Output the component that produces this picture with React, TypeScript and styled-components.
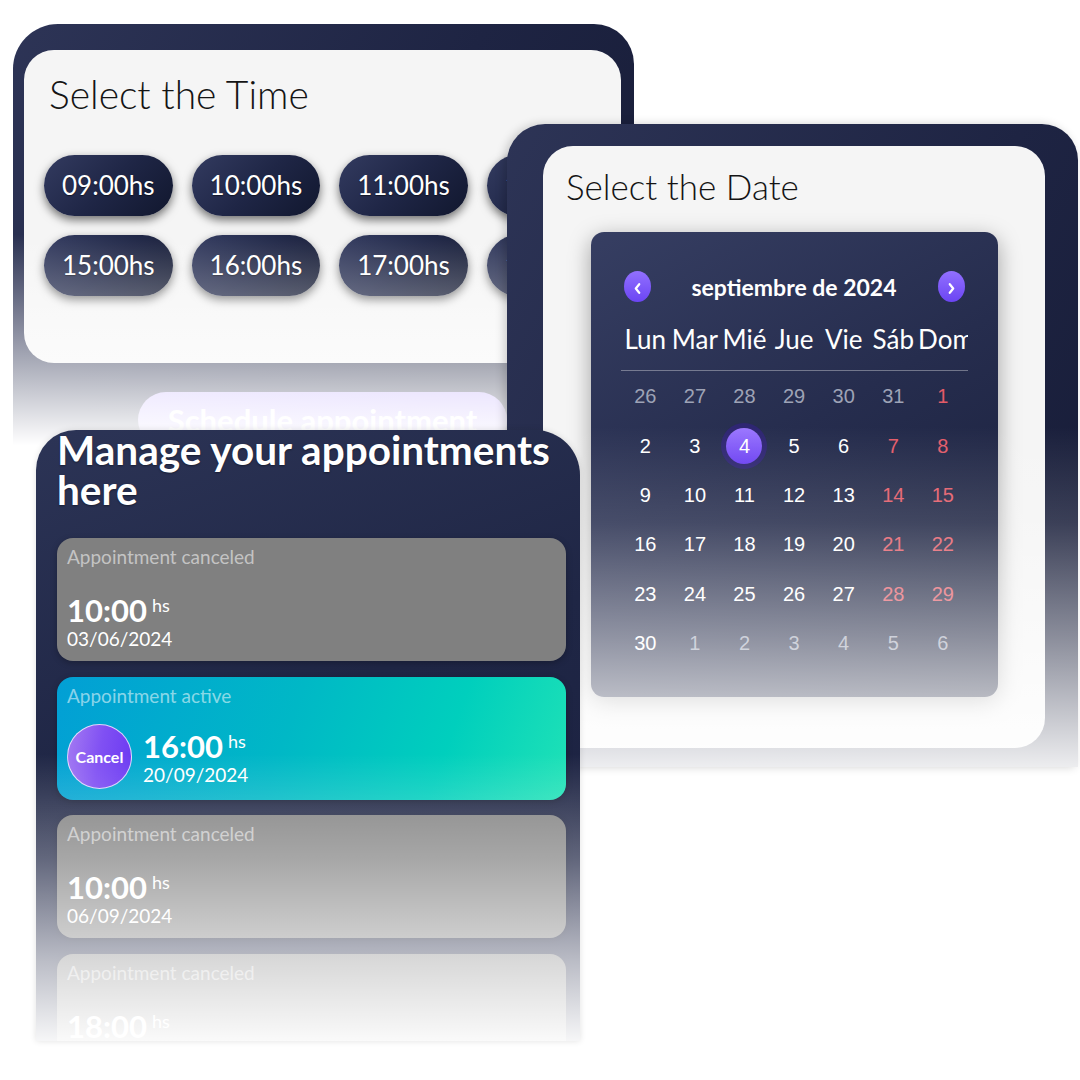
import React from 'react';
import styled, { createGlobalStyle, css } from 'styled-components';

const GlobalStyle = createGlobalStyle`
  html, body {
    margin: 0;
    padding: 0;
    background: #ffffff;
  }
  body {
    font-family: Lato, "Open Sans", sans-serif;
  }
  * {
    box-sizing: border-box;
  }
`;

const Canvas = styled.div`
  position: relative;
  width: 1080px;
  height: 1080px;
  overflow: hidden;
  background: #ffffff;
`;

// each screenshot is a "window" on a free canvas, fading out to white at the bottom
const Window = styled.section<{ $fade: string }>`
  position: absolute;
  overflow: hidden;
  background: linear-gradient(120deg, #2d3456 0%, #1e2443 55%, #161b35 100%);

  &::after {
    content: '';
    position: absolute;
    inset: 0;
    pointer-events: none;
    background: linear-gradient(to bottom, ${p => p.$fade});
  }
`;

const TimeWindow = styled(Window)`
  left: 13px;
  top: 24px;
  width: 621px;
  height: 421px;
  z-index: 1;
  border-radius: 45px 40px 0 0;
  padding: 26px 13px 0 11px;
  display: flex;
  flex-direction: column;
  align-items: center;
`;

const DateWindow = styled(Window)`
  left: 507px;
  top: 124px;
  width: 571px;
  height: 643px;
  z-index: 2;
  border-radius: 38px 36px 0 0;
  padding: 22px 33px 19px 36px;
  box-shadow: -3px 0 10px rgba(0, 0, 0, 0.18);
`;

const ManageWindow = styled(Window)`
  left: 36px;
  top: 430px;
  width: 544px;
  height: 611px;
  z-index: 3;
  border-radius: 40px 45px 0 0;
  padding: 0 14px 0 21px;
  background: linear-gradient(160deg, #2c3456 0%, #1f2645 45%, #1a2040 100%);
  box-shadow: 0 0 6px rgba(0, 0, 0, 0.12);
`;

const WhiteCard = styled.div`
  background: #f5f5f5;
  border-radius: 30px;
`;

const TimeCard = styled(WhiteCard)`
  width: 100%;
  height: 313px;
  padding: 21px 20px 0 20px;
  flex-shrink: 0;
`;

const DateCard = styled(WhiteCard)`
  height: 100%;
  padding: 19px 0 0 0;
  display: flex;
  flex-direction: column;
  align-items: center;
`;

const PanelTitle = styled.h2<{ $size: number }>`
  margin: 0;
  font-family: Lato, "Open Sans", sans-serif;
  font-weight: 300;
  font-size: ${p => p.$size}px;
  line-height: 1.2;
  color: #141414;
  white-space: nowrap;
`;

const TimeTitle = styled(PanelTitle)`
  margin: 0 0 37px 5px;
`;

const DateTitle = styled(PanelTitle)`
  align-self: flex-start;
  margin: 0 0 25px 23px;
`;

const PillRow = styled.div`
  display: flex;
  flex-wrap: nowrap;
  gap: 19px;
  margin-bottom: 19px;
`;

const TimePill = styled.button`
  flex-shrink: 0;
  height: 61px;
  padding: 0 18px;
  border: none;
  border-radius: 31px;
  background: linear-gradient(135deg, #333b60 0%, #1f2646 50%, #11172e 100%);
  box-shadow: 0 4px 10px rgba(0, 0, 0, 0.55);
  color: #ffffff;
  font-family: Lato, "Open Sans", sans-serif;
  font-size: 26px;
  font-weight: 400;
  text-shadow: 0 1px 1px rgba(0, 0, 0, 0.5);
`;

const ScheduleButton = styled.button`
  flex-shrink: 0;
  margin-top: 29px;
  width: 369px;
  height: 56px;
  padding: 0;
  border: none;
  border-radius: 28px;
  background: linear-gradient(90deg, #c3b0ff 0%, #b49cfb 100%);
  color: #ffffff;
  font-family: Lato, "Open Sans", sans-serif;
  font-size: 31px;
  font-weight: 700;
  white-space: nowrap;
`;

const Calendar = styled.div`
  width: 407px;
  height: 465px;
  flex-shrink: 0;
  border-radius: 13px;
  padding: 39px 30px 0 30px;
  background: linear-gradient(150deg, #363e62 0%, #262d4e 45%, #171d38 100%);
  box-shadow: 0 6px 22px rgba(0, 0, 0, 0.35);
`;

const NavRow = styled.div`
  display: flex;
  align-items: center;
  justify-content: space-between;
  padding: 0 3px;
  height: 31px;
`;

const NavButton = styled.button`
  width: 27px;
  height: 31px;
  padding: 3px 0 0 0;
  border: none;
  border-radius: 50%;
  display: flex;
  align-items: center;
  justify-content: center;
  background: linear-gradient(180deg, #9270ff 0%, #6b45f3 100%);
`;

const Chevron: React.FC<{ dir: 'left' | 'right' }> = ({ dir }) => (
  <svg width="7" height="11" viewBox="0 0 7 11" fill="none">
    <path
      d={dir === 'left' ? 'M5.2 1.2 L1.8 5.5 L5.2 9.8' : 'M1.8 1.2 L5.2 5.5 L1.8 9.8'}
      stroke="#ffffff"
      strokeWidth="2.2"
      strokeLinecap="round"
      strokeLinejoin="round"
    />
  </svg>
);

const MonthLabel = styled.span`
  font-family: Lato, "Open Sans", sans-serif;
  font-size: 23px;
  font-weight: 700;
  color: #ffffff;
`;

const WeekHeader = styled.div`
  display: grid;
  grid-template-columns: repeat(7, 49.6px);
  margin-top: 15px;
  padding-bottom: 9px;
  border-bottom: 1px solid rgba(255, 255, 255, 0.35);
  overflow: hidden;
`;

const WeekDay = styled.span`
  height: 44px;
  line-height: 44px;
  text-align: center;
  white-space: nowrap;
  font-family: Lato, "Open Sans", sans-serif;
  font-size: 26px;
  font-weight: 400;
  color: #ffffff;
`;

const DayGrid = styled.div`
  display: grid;
  grid-template-columns: repeat(7, 49.6px);
  grid-auto-rows: 49.4px;
  padding-top: 1px;
`;

type DayKind = 'other' | 'normal' | 'weekend' | 'selected';

const Day = styled.span<{ $kind: DayKind }>`
  display: flex;
  align-items: center;
  justify-content: center;
  font-family: "Liberation Sans", Arial, sans-serif;
  font-size: 20px;
  color: ${p =>
    p.$kind === 'other' ? '#9ea3b6' : p.$kind === 'weekend' ? '#e35b68' : '#ffffff'};

  ${p =>
    p.$kind === 'selected' &&
    css`
      & > b {
        width: 36px;
        height: 36px;
        border-radius: 50%;
        display: flex;
        align-items: center;
        justify-content: center;
        font-weight: 400;
        background: linear-gradient(180deg, #9c78ff 0%, #6a3ff2 100%);
        box-shadow: 0 0 0 5px rgba(48, 36, 120, 0.85);
      }
    `}
`;

const ManageTitle = styled.h1`
  margin: 0 0 28px 0;
  font-family: Lato, "Open Sans", sans-serif;
  font-size: 40.5px;
  font-weight: 700;
  line-height: 40px;
  color: #ffffff;
  text-shadow: 0 1px 2px rgba(0, 0, 0, 0.4);
`;

const CardList = styled.div`
  display: flex;
  flex-direction: column;
  gap: 15.7px;
`;

const AppointmentCard = styled.div<{ $active?: boolean }>`
  height: 123px;
  flex-shrink: 0;
  border-radius: 16px;
  padding: 7px 10px 11px 10px;
  display: flex;
  flex-direction: column;
  justify-content: space-between;
  background: ${p =>
    p.$active
      ? 'linear-gradient(110deg, #029fd5 0%, #00b8c6 45%, #00cfbd 75%, #20e2b6 100%)'
      : '#808080'};
  box-shadow: 0 2px 6px rgba(0, 0, 0, 0.25);
`;

const StatusLabel = styled.span`
  font-family: Lato, "Open Sans", sans-serif;
  font-size: 19px;
  font-weight: 400;
  line-height: 23px;
  color: rgba(255, 255, 255, 0.55);
`;

const CardBottom = styled.div`
  display: flex;
  align-items: center;
  gap: 11px;
`;

const CancelButton = styled.button`
  width: 65px;
  height: 65px;
  padding: 0;
  margin-top: -4px;
  flex-shrink: 0;
  border-radius: 50%;
  border: 1.5px solid rgba(255, 255, 255, 0.75);
  background: linear-gradient(100deg, #a57cf2 0%, #8050f3 50%, #6a38f2 100%);
  color: #ffffff;
  font-family: Lato, "Open Sans", sans-serif;
  font-size: 16px;
  font-weight: 700;
`;

const TimeBlock = styled.div`
  display: flex;
  flex-direction: column;
`;

const TimeLine = styled.div`
  display: flex;
  align-items: flex-start;
`;

const Hour = styled.span`
  font-family: Lato, "Open Sans", sans-serif;
  font-size: 31px;
  font-weight: 700;
  line-height: 31px;
  color: #ffffff;
`;

const Hs = styled.span`
  margin: 1px 0 0 5px;
  font-family: Lato, "Open Sans", sans-serif;
  font-size: 18px;
  font-weight: 400;
  line-height: 18px;
  color: #ffffff;
`;

const DateText = styled.span`
  margin-top: 2px;
  font-family: Lato, "Open Sans", sans-serif;
  font-size: 19px;
  font-weight: 400;
  line-height: 22px;
  color: #ffffff;
`;

const timeRows = [
  ['09:00hs', '10:00hs', '11:00hs', '12:00hs'],
  ['15:00hs', '16:00hs', '17:00hs', '18:00hs'],
];

const weekDays = ['Lun', 'Mar', 'Mié', 'Jue', 'Vie', 'Sáb', 'Dom'];

// septiembre 2024: the grid starts on Monday 26 August
const buildDays = (): { n: number; kind: DayKind }[] => {
  const out: { n: number; kind: DayKind }[] = [];
  for (let d = 26; d <= 31; d++) out.push({ n: d, kind: 'other' });
  for (let d = 1; d <= 30; d++) {
    const col = out.length % 7;
    let kind: DayKind = col >= 5 ? 'weekend' : 'normal';
    if (d === 4) kind = 'selected';
    out.push({ n: d, kind });
  }
  for (let d = 1; out.length < 42; d++) out.push({ n: d, kind: 'other' });
  return out;
};

const appointments = [
  { status: 'Appointment canceled', hour: '10:00', date: '03/06/2024', active: false },
  { status: 'Appointment active', hour: '16:00', date: '20/09/2024', active: true },
  { status: 'Appointment canceled', hour: '10:00', date: '06/09/2024', active: false },
  { status: 'Appointment canceled', hour: '18:00', date: '12/09/2024', active: false },
];

const timeFade = 'rgba(255,255,255,0) 50%, rgba(255,255,255,1) 100%';
const dateFade =
  'rgba(255,255,255,0) 47%, rgba(255,255,255,0.15) 62%, rgba(255,255,255,0.5) 80%, rgba(255,255,255,0.92) 100%';
const manageFade =
  'rgba(255,255,255,0) 53%, rgba(255,255,255,0.3) 70%, rgba(255,255,255,0.7) 87%, rgba(255,255,255,0.96) 100%';

const App: React.FC = () => {
  const days = buildDays();

  return (
    <>
      <GlobalStyle />
      <Canvas>
        <TimeWindow $fade={timeFade}>
          <TimeCard>
            <TimeTitle $size={39}>Select the Time</TimeTitle>
            {timeRows.map((row, i) => (
              <PillRow key={i}>
                {row.map(t => (
                  <TimePill key={t}>{t}</TimePill>
                ))}
              </PillRow>
            ))}
          </TimeCard>
          <ScheduleButton>Schedule appointment</ScheduleButton>
        </TimeWindow>

        <DateWindow $fade={dateFade}>
          <DateCard>
            <DateTitle $size={35}>Select the Date</DateTitle>
            <Calendar>
              <NavRow>
                <NavButton aria-label="Mes anterior">
                  <Chevron dir="left" />
                </NavButton>
                <MonthLabel>septiembre de 2024</MonthLabel>
                <NavButton aria-label="Mes siguiente">
                  <Chevron dir="right" />
                </NavButton>
              </NavRow>
              <WeekHeader>
                {weekDays.map(w => (
                  <WeekDay key={w}>{w}</WeekDay>
                ))}
              </WeekHeader>
              <DayGrid>
                {days.map((d, i) => (
                  <Day key={i} $kind={d.kind}>
                    {d.kind === 'selected' ? <b>{d.n}</b> : d.n}
                  </Day>
                ))}
              </DayGrid>
            </Calendar>
          </DateCard>
        </DateWindow>

        <ManageWindow $fade={manageFade}>
          <ManageTitle>Manage your appointments here</ManageTitle>
          <CardList>
            {appointments.map((a, i) => (
              <AppointmentCard key={i} $active={a.active}>
                <StatusLabel>{a.status}</StatusLabel>
                <CardBottom>
                  {a.active && <CancelButton>Cancel</CancelButton>}
                  <TimeBlock>
                    <TimeLine>
                      <Hour>{a.hour}</Hour>
                      <Hs>hs</Hs>
                    </TimeLine>
                    <DateText>{a.date}</DateText>
                  </TimeBlock>
                </CardBottom>
              </AppointmentCard>
            ))}
          </CardList>
        </ManageWindow>
      </Canvas>
    </>
  );
};

export default App;
